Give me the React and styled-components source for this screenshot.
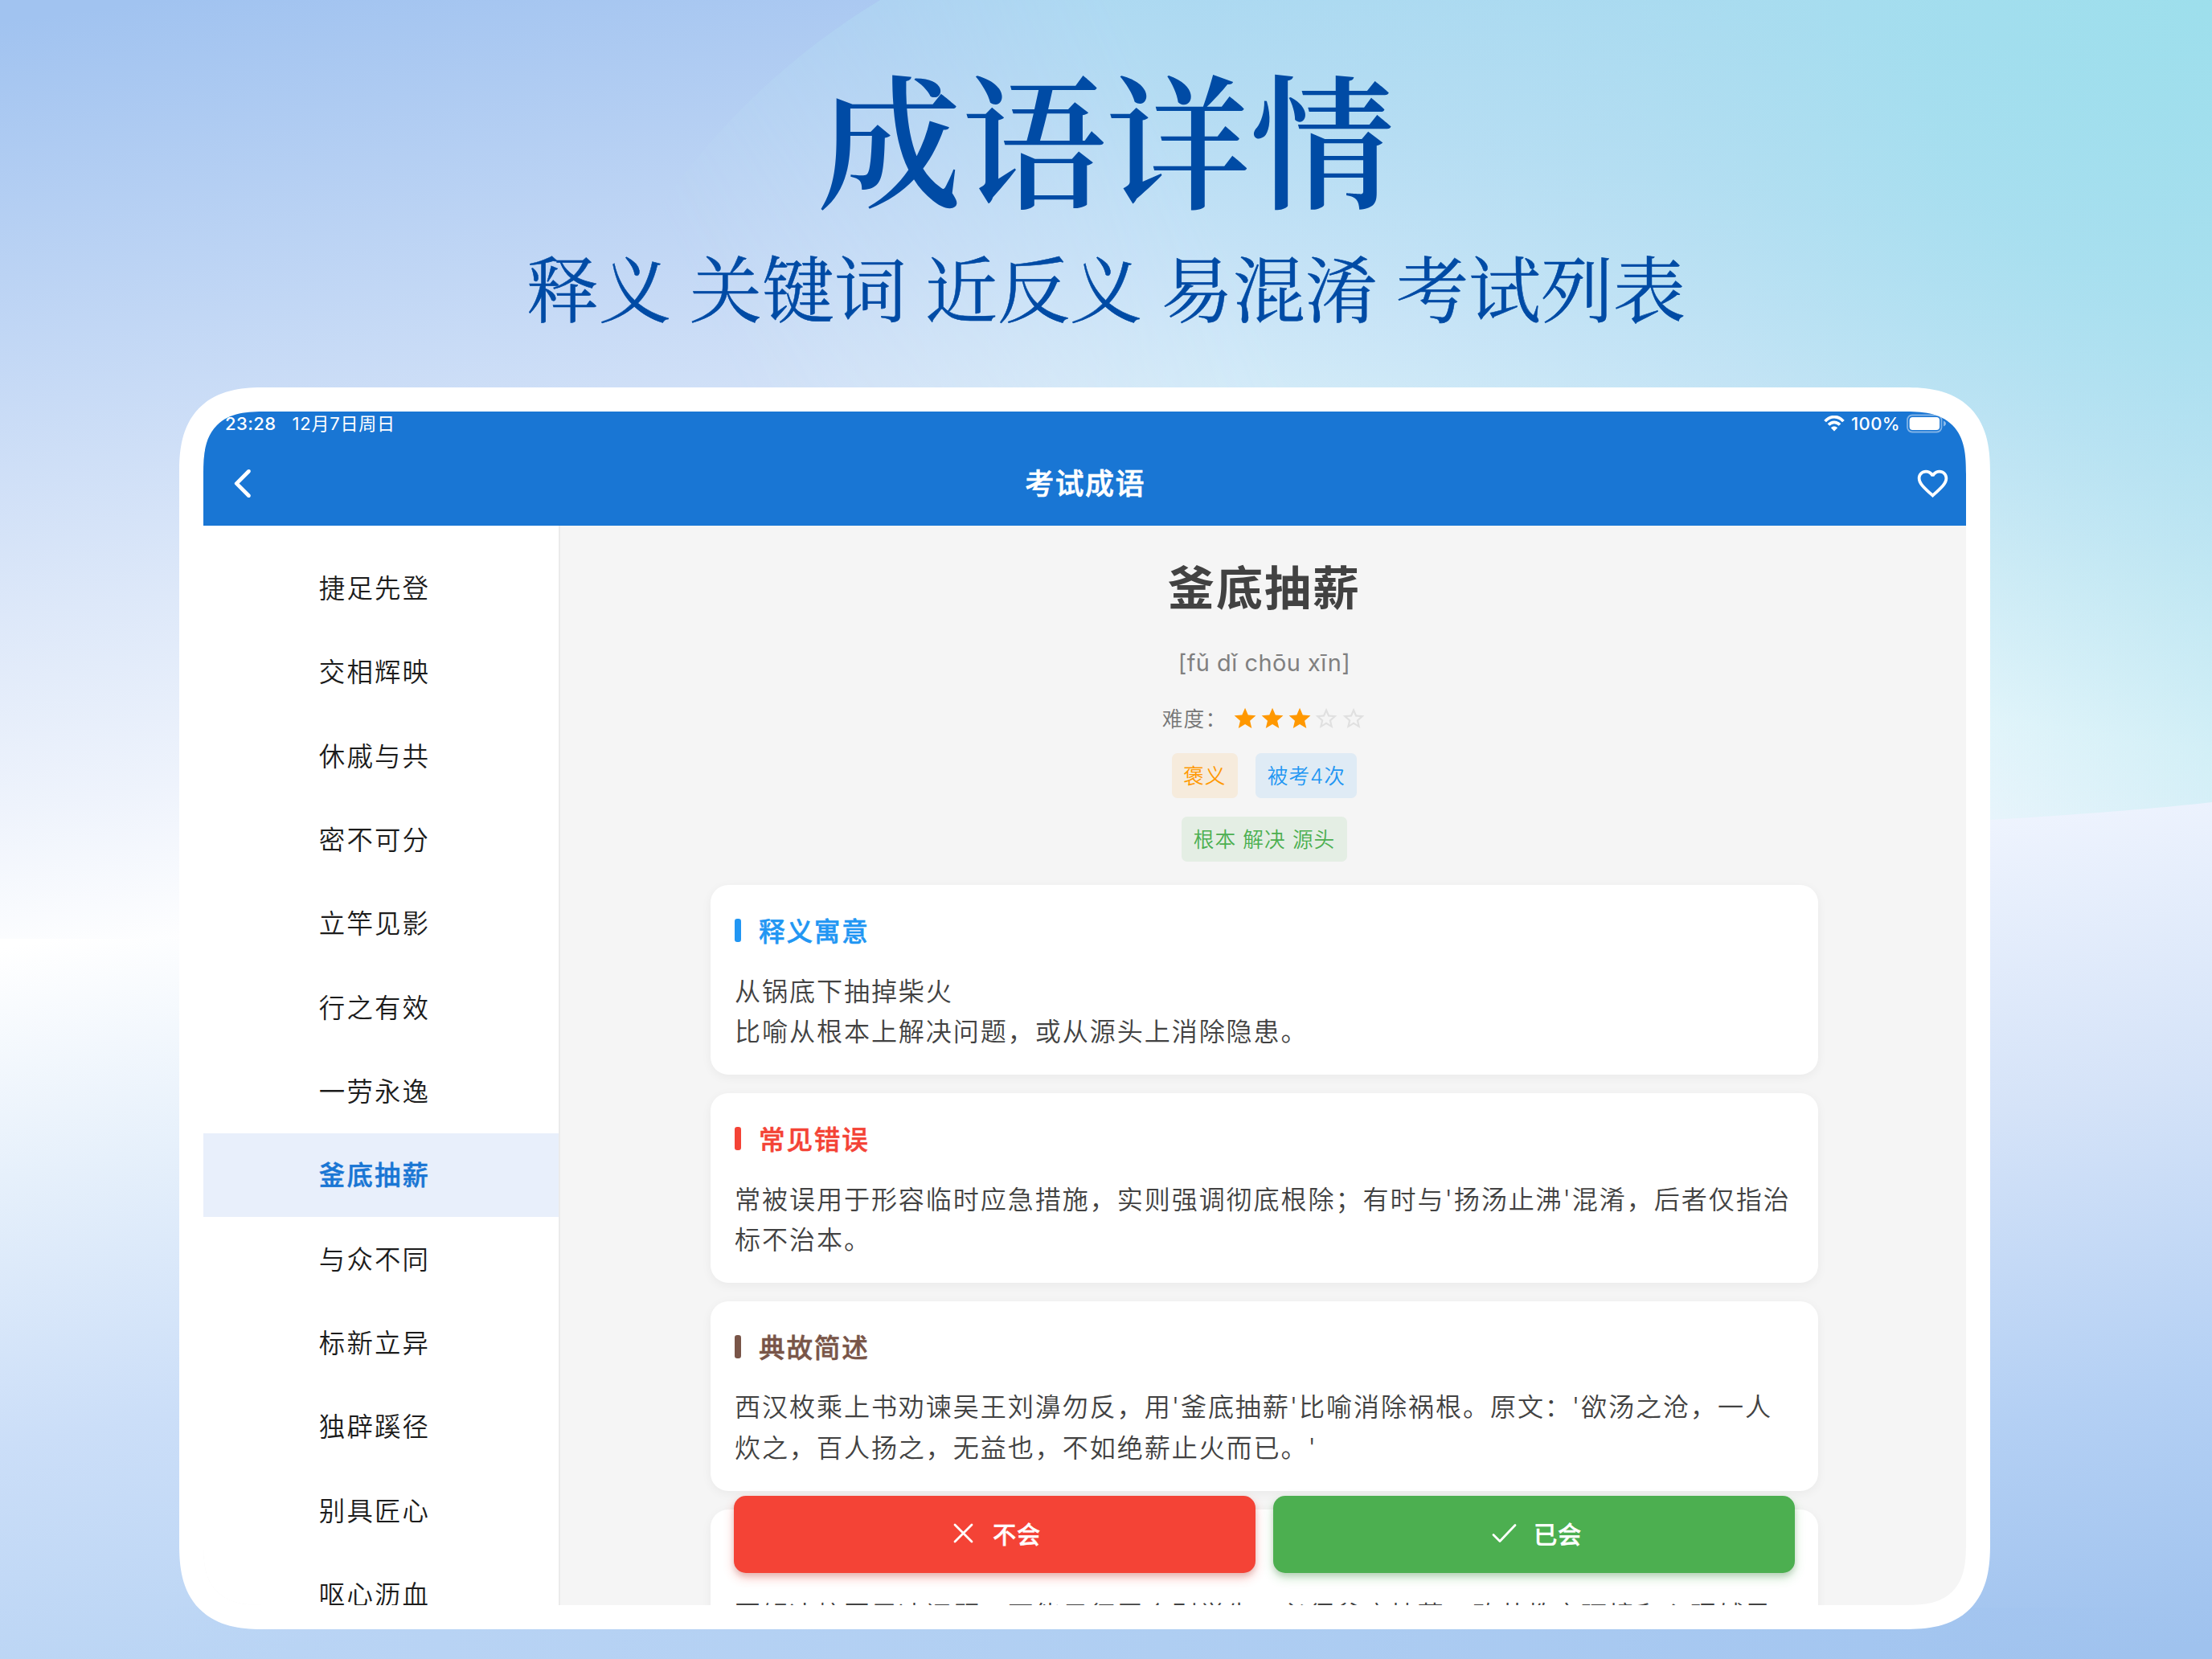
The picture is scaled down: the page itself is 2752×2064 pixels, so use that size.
import React from "react";
import styled, { createGlobalStyle, css } from "styled-components";
import { MdFavoriteBorder, MdStar, MdStarBorder } from "react-icons/md";

const sans = `Inter, "Noto Sans CJK SC", sans-serif`;
const serif = `"Songti SC", "Noto Serif CJK SC", "Noto Serif SC", "Source Han Serif SC", "Noto Sans CJK SC", serif`;

const GlobalStyle = createGlobalStyle`
  * { box-sizing: border-box; }
  html, body { margin: 0; padding: 0; }
  body { width: 2752px; height: 2064px; overflow: hidden; font-family: ${sans}; }
`;

const Poster = styled.main`
  position: relative;
  width: 2752px;
  height: 2064px;
  overflow: hidden;
  display: flex;
  flex-direction: column;
  align-items: center;
  isolation: isolate;
`;

const Backdrop = styled.svg`
  position: absolute;
  inset: 0;
  z-index: -1;
`;

const Headline = styled.h1`
  margin: 63px 0 0;
  height: 208px;
  line-height: 208px;
  font-family: ${serif};
  font-size: 179.5px;
  font-weight: 600;
  color: #004ba5;
`;

const Subline = styled.p`
  margin: 30px 0 0;
  height: 108px;
  line-height: 108px;
  font-family: ${serif};
  font-size: 90px;
  font-weight: 400;
  -webkit-text-stroke: 0.5px #004ba5;
  color: #004ba5;
  white-space: nowrap;
`;

const Device = styled.section`
  width: 2253px;
  height: 1545px;
  margin: 73px 53px 0 0;
  padding: 30px;
  background: #fff;
  border-radius: 88px;
  flex: none;
  @supports (corner-shape: squircle) {
    border-radius: 106px;
    corner-shape: superellipse(1.35);
  }
`;

const Screen = styled.div`
  width: 2193px;
  height: 1485px;
  border-radius: 57px;
  overflow: hidden;
  display: flex;
  flex-direction: column;
  background: #f5f5f5;
  @supports (corner-shape: squircle) {
    border-radius: 78px;
    corner-shape: superellipse(1.5);
  }
`;

const Header = styled.header`
  height: 142px;
  flex: none;
  background: #1976d4;
  color: #fff;
`;

const StatusBar = styled.div`
  display: flex;
  align-items: center;
  height: 30px;
  padding: 0 24px 0 27px;
  font-size: 22px;
  letter-spacing: 0.4px;
  font-weight: 500;
`;

const StatusDate = styled.span`
  margin: 0 0 4px 20px;
  font-weight: 400;
  letter-spacing: 0.8px;
`;

const StatusRight = styled.div`
  margin-left: auto;
  display: flex;
  align-items: center;
  gap: 8px;
`;

const NavBar = styled.div`
  height: 120px;
  display: grid;
  grid-template-columns: 1fr auto 1fr;
  align-items: center;
  padding: 0 19px 1px 27px;
`;

const NavTitle = styled.h2`
  margin: 0 7px 5px 0;
  font-size: 36px;
  font-weight: 500;
  -webkit-text-stroke: 0.6px currentColor;
  letter-spacing: 1.4px;
`;

const NavAction = styled.div`
  display: flex;
  justify-self: end;
`;

const Body = styled.div`
  flex: 1;
  min-height: 0;
  display: flex;
`;

const Sidebar = styled.nav`
  width: 444px;
  flex: none;
  padding-top: 25.5px;
  background: #fff;
  border-right: 2px solid #ebebeb;
  overflow: hidden;
`;

const IdiomItem = styled.div`
  height: 104.33px;
  display: flex;
  align-items: center;
  justify-content: center;
  padding-bottom: 4px;
  padding-right: 16px;
  font-size: 32.4px;
  letter-spacing: 2.2px;
  font-weight: 350;
  color: #1c1c1c;
  ${({ $active }) =>
    $active &&
    css`
      background: #e8effb;
      color: #1976d4;
      font-weight: 500;
      -webkit-text-stroke: 0.5px currentColor;
    `}
`;

const Detail = styled.article`
  position: relative;
  flex: 1;
  min-width: 0;
  padding: 0 183.5px 0 186.5px;
  display: flex;
  flex-direction: column;
  align-items: center;
  overflow: hidden;
`;

const Word = styled.h3`
  margin: 38px 0 0;
  height: 80px;
  line-height: 80px;
  font-size: 58px;
  font-weight: 600;
  letter-spacing: 2.1px;
  color: #424242;
  flex: none;
`;

const Pinyin = styled.div`
  margin-top: 33px;
  height: 40px;
  line-height: 40px;
  font-size: 28.9px;
  letter-spacing: 0.5px;
  color: #808080;
  flex: none;
`;

const Difficulty = styled.div`
  margin-top: 32.5px;
  height: 34px;
  display: flex;
  align-items: center;
  font-size: 25.7px;
  letter-spacing: 1.2px;
  font-weight: 350;
  color: #757575;
  flex: none;
`;

const DifficultyLabel = styled.span`
  margin-bottom: 4px;
`;

const Stars = styled.div`
  display: flex;
  gap: 1.6px;
  margin-left: 7px;
`;

const TagRow = styled.div`
  display: flex;
  gap: 22.5px;
  margin-top: ${({ $gap }) => $gap}px;
  flex: none;
`;

const Tag = styled.span`
  height: 56px;
  line-height: 57px;
  padding: 0 14.4px;
  border-radius: 7px;
  font-size: 25.7px;
  letter-spacing: 1px;
  font-weight: 350;
  color: ${({ $color }) => $color};
  background: ${({ $color }) => $color}1a;
`;

const Cards = styled.div`
  margin-top: 29.5px;
  width: 1378px;
  display: flex;
  flex-direction: column;
  gap: 22.5px;
`;

const Card = styled.section`
  height: 236.4px;
  flex: none;
  padding: 28.9px 30px;
  background: #fff;
  border-radius: 22px;
  box-shadow: 0 3px 13px rgba(0, 0, 0, 0.05);
`;

const CardTitle = styled.h4`
  margin: 0 0 22.8px;
  height: 56px;
  display: flex;
  align-items: center;
  gap: 22px;
  color: ${({ $color }) => $color};
  &::before {
    content: "";
    width: 8px;
    height: 29px;
    border-radius: 3.2px;
    background: ${({ $color }) => $color};
  }
`;

const CardTitleText = styled.span`
  margin-bottom: 3px;
  font-size: 32.6px;
  font-weight: 500;
  -webkit-text-stroke: 0.5px currentColor;
  letter-spacing: 1.8px;
`;

const CardText = styled.p`
  margin: 0;
  font-size: 32.1px;
  line-height: 50.6px;
  letter-spacing: 1.9px;
  font-weight: 350;
  color: #424242;
  white-space: pre;
`;

const ActionBar = styled.div`
  position: absolute;
  left: 216px;
  right: 213px;
  top: 1207px;
  display: flex;
  gap: 22.5px;
`;

const ActionButton = styled.button`
  flex: 1;
  height: 95.5px;
  display: flex;
  align-items: center;
  justify-content: center;
  border: 0;
  border-radius: 15px;
  padding: 0 0 3px 7px;
  font-family: ${sans};
  font-size: 29.3px;
  font-weight: 500;
  -webkit-text-stroke: 0.4px currentColor;
  letter-spacing: 0.9px;
  color: #fff;
  background: ${({ $color }) => $color};
  box-shadow: 0 6px 13px ${({ $color }) => $color}4d, 0 4px 6px rgba(0, 0, 0, 0.12);
  svg {
    margin-right: ${({ $iconGap }) => $iconGap}px;
  }
`;

const idioms = [
  "捷足先登", "交相辉映", "休戚与共", "密不可分", "立竿见影", "行之有效", "一劳永逸",
  "釜底抽薪", "与众不同", "标新立异", "独辟蹊径", "别具匠心", "呕心沥血",
];

const sections = [
  { title: "释义寓意", color: "#2196f3", text: "从锅底下抽掉柴火\n比喻从根本上解决问题，或从源头上消除隐患。" },
  { title: "常见错误", color: "#f44336", text: "常被误用于形容临时应急措施，实则强调彻底根除；有时与'扬汤止沸'混淆，后者仅指治\n标不治本。" },
  { title: "典故简述", color: "#795548", text: "西汉枚乘上书劝谏吴王刘濞勿反，用'釜底抽薪'比喻消除祸根。原文：'欲汤之沧，一人\n炊之，百人扬之，无益也，不如绝薪止火而已。'" },
  { title: "", color: "#009688", text: "要解决校园霸凌问题，不能只惩罚个别学生，必须釜底抽薪，改革教育环境和心理辅导" },
];

function BackdropArt() {
  return (
    <Backdrop width="2752" height="2064" viewBox="0 0 2752 2064">
      <defs>
        <linearGradient id="base" gradientUnits="userSpaceOnUse" x1="200" y1="0" x2="360" y2="1170">
          <stop offset="0" stopColor="#a1c3f0" />
          <stop offset="0.4" stopColor="#c8dbf6" />
          <stop offset="0.62" stopColor="#dde8f9" />
          <stop offset="0.82" stopColor="#eef3fc" />
          <stop offset="1" stopColor="#ffffff" />
        </linearGradient>
        <linearGradient id="sky" gradientUnits="userSpaceOnUse" x1="2060" y1="-10" x2="1900" y2="1010">
          <stop offset="0" stopColor="#a6d7f0" />
          <stop offset="0.22" stopColor="#b5dcf3" />
          <stop offset="0.44" stopColor="#c9e4f7" />
          <stop offset="0.62" stopColor="#d8eff8" />
          <stop offset="0.8" stopColor="#eaf8fc" />
          <stop offset="1" stopColor="#eff5fd" />
        </linearGradient>
        <radialGradient id="cyan" gradientUnits="userSpaceOnUse" cx="2752" cy="0" r="1250">
          <stop offset="0" stopColor="#9bdfec" />
          <stop offset="0.3" stopColor="#a3e0ee" stopOpacity="0.72" />
          <stop offset="0.6" stopColor="#b2e2f0" stopOpacity="0.3" />
          <stop offset="1" stopColor="#c5e9f5" stopOpacity="0" />
        </radialGradient>
        <linearGradient id="edge" x1="0" x2="1" y1="0" y2="0">
          <stop offset="0" stopColor="#a6dfec" stopOpacity="0" />
          <stop offset="1" stopColor="#a6dfec" stopOpacity="0.24" />
        </linearGradient>
        <linearGradient id="veilFade" gradientUnits="userSpaceOnUse" x1="830" y1="290" x2="1600" y2="-50">
          <stop offset="0" stopColor="#fff" stopOpacity="0" />
          <stop offset="0.35" stopColor="#fff" stopOpacity="0.42" />
          <stop offset="0.75" stopColor="#fff" stopOpacity="1" />
        </linearGradient>
        <mask id="veil">
          <rect width="2752" height="2064" fill="url(#veilFade)" />
        </mask>
        <linearGradient id="lower" gradientUnits="userSpaceOnUse" x1="0" y1="1180" x2="170" y2="2100">
          <stop offset="0" stopColor="#ffffff" />
          <stop offset="0.3" stopColor="#e6f0fb" />
          <stop offset="0.65" stopColor="#cbdef8" />
          <stop offset="1" stopColor="#b9d4f4" />
        </linearGradient>
        <linearGradient id="lowRight" gradientUnits="userSpaceOnUse" x1="2440" y1="1010" x2="2640" y2="2064">
          <stop offset="0" stopColor="#eff4fe" />
          <stop offset="0.35" stopColor="#d5e3f8" />
          <stop offset="0.7" stopColor="#b4d0f4" />
          <stop offset="1" stopColor="#9fc2ee" />
        </linearGradient>
        <linearGradient id="floor" gradientUnits="userSpaceOnUse" x1="200" x2="2700" y1="2064" y2="2064">
          <stop offset="0" stopColor="#b9d4f4" stopOpacity="0" />
          <stop offset="0.14" stopColor="#b8d3f4" />
          <stop offset="0.5" stopColor="#afcef2" />
          <stop offset="0.85" stopColor="#a4c6f0" />
          <stop offset="1" stopColor="#9fc2ee" stopOpacity="0" />
        </linearGradient>
      </defs>
      <rect width="2752" height="1240" fill="url(#base)" />
      <path d="M1095 0H2752V1200H500C600 700 700 240 1095 0Z" fill="url(#sky)" mask="url(#veil)" />
      <rect x="1480" width="1272" height="1260" fill="url(#cyan)" />
      <rect x="2460" y="0" width="292" height="1200" fill="url(#edge)" />
      <rect y="1168" width="1400" height="896" fill="url(#lower)" />
      <path d="M1376 1060C1800 1050 2476 1030 2752 998V2064H1376Z" fill="url(#lowRight)" />
      <rect x="200" y="2000" width="2500" height="64" fill="url(#floor)" />
    </Backdrop>
  );
}

function WifiIcon() {
  return (
    <svg width="26" height="20" viewBox="0 0 26 20" fill="none" stroke="#fff" strokeWidth="3.6">
      <path d="M1.6 7.2C8-.3 18-.3 24.400 7.200" />
      <path d="M6 11.600C10 7.300 16 7.300 20 11.600" />
      <path d="M13 19.500L8.900 15.200C11.200 12.900 14.800 12.900 17.100 15.200Z" fill="#fff" stroke="none" />
    </svg>
  );
}

function BatteryIcon() {
  return (
    <svg width="50" height="24" viewBox="0 0 50 24">
      <rect x="1" y="1.500" width="42.500" height="21" rx="6" fill="none" stroke="#fff" strokeOpacity="0.45" strokeWidth="1.800" />
      <rect x="3.600" y="4" width="37.500" height="16" rx="4" fill="#fff" />
      <path d="M46 8.500c4 1.500 4 5.500 0 7z" fill="#fff" fillOpacity="0.5" />
    </svg>
  );
}

export default function App() {
  return (
    <Poster lang="zh-CN">
      <GlobalStyle />
      <BackdropArt />
      <Headline>成语详情</Headline>
      <Subline>释义 关键词 近反义 易混淆 考试列表</Subline>
      <Device>
        <Screen>
          <Header>
            <StatusBar>
              <span>23:28</span>
              <StatusDate>12月7日周日</StatusDate>
              <StatusRight>
                <WifiIcon />
                <span>100%</span>
                <BatteryIcon />
              </StatusRight>
            </StatusBar>
            <NavBar>
              <svg width="45" height="45" viewBox="0 0 24 24" fill="#fff">
                <path d="M16.62 2.99c-.49-.49-1.28-.49-1.77 0L6.54 11.3c-.39.39-.39 1.02 0 1.41l8.31 8.31c.49.49 1.28.49 1.77 0s.49-1.28 0-1.77L9.38 12l7.25-7.25c.48-.48.48-1.28-.01-1.76z" />
              </svg>
              <NavTitle>考试成语</NavTitle>
              <NavAction><MdFavoriteBorder size={45} /></NavAction>
            </NavBar>
          </Header>
          <Body>
            <Sidebar>
              {idioms.map((idiom) => (
                <IdiomItem key={idiom} $active={idiom === "釜底抽薪"}>{idiom}</IdiomItem>
              ))}
            </Sidebar>
            <Detail>
              <Word>釜底抽薪</Word>
              <Pinyin>[fǔ dǐ chōu xīn]</Pinyin>
              <Difficulty>
                <DifficultyLabel>难度：</DifficultyLabel>
                <Stars>
                  {[1, 2, 3, 4, 5].map((n) =>
                    n <= 3 ? <MdStar key={n} size={32.1} color="#ff9800" /> : <MdStarBorder key={n} size={32.1} color="#e0e0e0" />
                  )}
                </Stars>
              </Difficulty>
              <TagRow $gap={25.5}>
                <Tag $color="#ff9800">褒义</Tag>
                <Tag $color="#2196f3">被考4次</Tag>
              </TagRow>
              <TagRow $gap={22.5}>
                <Tag $color="#4caf50">根本 解决 源头</Tag>
              </TagRow>
              <Cards>
                {sections.map(({ title, color, text }) => (
                  <Card key={color}>
                    <CardTitle $color={color}>
                      {title && <CardTitleText>{title}</CardTitleText>}
                    </CardTitle>
                    <CardText>{text}</CardText>
                  </Card>
                ))}
              </Cards>
              <ActionBar>
                <ActionButton $color="#f44336" $iconGap={23.5}>
                  <svg width="25" height="25" viewBox="0 0 25 25" fill="none" stroke="#fff" strokeWidth="2.800" strokeLinecap="round">
                    <path d="M2 2L23 23M23 2L2 23" />
                  </svg>
                  不会
                </ActionButton>
                <ActionButton $color="#4caf50" $iconGap={21}>
                  <svg width="31" height="25" viewBox="0 0 31 25" fill="none" stroke="#fff" strokeWidth="2.800" strokeLinecap="round" strokeLinejoin="round">
                    <path d="M2 14.500L10 22.500L29 2.500" />
                  </svg>
                  已会
                </ActionButton>
              </ActionBar>
            </Detail>
          </Body>
        </Screen>
      </Device>
    </Poster>
  );
}
